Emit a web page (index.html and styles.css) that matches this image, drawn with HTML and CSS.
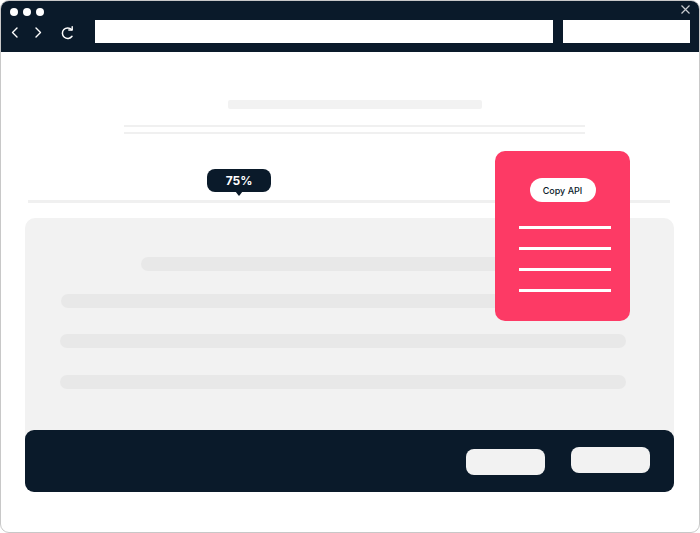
FILE: index.html
```html
<!DOCTYPE html>
<html>
<head>
<meta charset="utf-8">
<link rel="stylesheet" href="styles.css">
</head>
<body>
<div class="window">
  <header class="chrome">
    <div class="chrome-top">
      <div class="dots"><span></span><span></span><span></span></div>
      <svg class="close" width="9" height="9" viewBox="0 0 9 9"><path d="M0.5 0.5 L8.5 8.5 M8.5 0.5 L0.5 8.5" stroke="#c9ccd0" stroke-width="1.2" fill="none"/></svg>
    </div>
    <div class="chrome-bar">
      <svg class="nav" width="94" height="24" viewBox="0 0 94 24">
        <path d="M16 9 L11.5 13.5 L16 18" stroke="#fff" stroke-width="1.4" fill="none" stroke-linecap="round" stroke-linejoin="round"/>
        <path d="M35 9 L39.5 13.5 L35 18" stroke="#fff" stroke-width="1.4" fill="none" stroke-linecap="round" stroke-linejoin="round"/>
        <path d="M70.6 10.6 A5.3 5.3 0 1 0 71 17.3" stroke="#fff" stroke-width="1.5" fill="none" stroke-linecap="round"/>
        <path d="M71.2 7.6 L71.2 11 L67.8 11" stroke="#fff" stroke-width="1.4" fill="none" stroke-linecap="round" stroke-linejoin="round"/>
      </svg>
      <div class="url"></div>
      <div class="search"></div>
    </div>
  </header>
  <main class="page">
    <div class="title-bar"></div>
    <div class="sub-line"></div>
    <div class="sub-line second"></div>
    <div class="divider"></div>
    <section class="card">
      <div class="bar b1"></div>
      <div class="bar b2"></div>
      <div class="bar b3"></div>
      <div class="bar b4"></div>
      <div class="footer">
        <div class="btn"></div>
        <div class="btn up"></div>
      </div>
    </section>
  </main>
  <div class="tooltip">75%</div>
  <aside class="api-card">
    <div class="pill">Copy API</div>
    <div class="rule"></div>
    <div class="rule"></div>
    <div class="rule"></div>
    <div class="rule"></div>
  </aside>
</div>
</body>
</html>
```

FILE: styles.css
```css
* { box-sizing: border-box; }
html, body { margin: 0; padding: 0; background: #fff; }
body { font-family: Inter, "Open Sans", sans-serif; }

.window {
  position: relative;
  width: 700px;
  height: 533px;
  border: 1px solid #c8c8c8;
  border-radius: 9px;
  overflow: hidden;
  background: #fff;
}

.chrome {
  background: #0a1a2a;
  height: 51px;
  display: flex;
  flex-direction: column;
}
.chrome-top {
  height: 18px;
  display: flex;
  justify-content: space-between;
  align-items: flex-start;
  padding: 7px 9px 0 9px;
}
.dots { display: flex; gap: 5px; }
.dots span { width: 8px; height: 8px; border-radius: 50%; background: #fff; display: block; }
.close { margin-top: -3px; }

.chrome-bar {
  display: flex;
  align-items: center;
  height: 24px;
}
.nav { flex: none; }
.url { width: 458px; height: 23px; background: #fff; }
.search { width: 127px; height: 23px; background: #fff; margin-left: 10px; }

.page { padding-top: 48px; }
.title-bar {
  width: 254px; height: 9px; margin-left: 227px;
  background: #f2f2f2; border-radius: 2px;
}
.sub-line {
  width: 461px; height: 2px; margin-left: 123px; margin-top: 16px;
  background: #f0f0f0;
}
.sub-line.second { margin-top: 5px; }
.divider {
  width: 642px; height: 3px; margin-left: 27px; margin-top: 66px;
  background: #f0f0f0;
}

.card {
  margin: 15px 0 0 24px;
  width: 649px;
  height: 274px;
  background: #f2f2f2;
  border-radius: 10px 10px 9px 9px;
  display: flex;
  flex-direction: column;
  padding-top: 39px;
}
.bar { height: 14px; border-radius: 7px; background: #e8e8e8; }
.b1 { width: 418px; margin-left: 116px; }
.b2 { width: 565px; margin-left: 36px; margin-top: 23px; }
.b3 { width: 566px; margin-left: 35px; margin-top: 26px; }
.b4 { width: 566px; margin-left: 35px; margin-top: 27px; }

.footer {
  margin-top: auto;
  height: 62px;
  background: #0a1a2a;
  border-radius: 9px;
  display: flex;
  justify-content: flex-end;
  align-items: center;
  gap: 26px;
  padding-right: 24px;
}
.btn { width: 79px; height: 26px; border-radius: 8px; background: #f2f2f2; margin-top: 1px; }
.btn.up { margin-top: -2px; }

.tooltip {
  position: absolute;
  left: 206px;
  top: 168px;
  width: 64px;
  height: 23px;
  border-radius: 8px;
  background: #0a1a2a;
  color: #fff;
  font-size: 12px;
  font-weight: 700;
  display: flex;
  align-items: center;
  justify-content: center;
}
.tooltip::after {
  content: "";
  position: absolute;
  left: 28px;
  top: 22px;
  border-left: 4px solid transparent;
  border-right: 4px solid transparent;
  border-top: 5px solid #0a1a2a;
}

.api-card {
  position: absolute;
  left: 494px;
  top: 150px;
  width: 135px;
  height: 170px;
  border-radius: 10px;
  background: #fd3a65;
  display: flex;
  flex-direction: column;
  align-items: center;
  padding-top: 27px;
}
.pill {
  width: 66px; height: 24px; border-radius: 12px;
  background: #fff; color: #0a1a2a;
  font-size: 9px; font-weight: 500;
  display: flex; align-items: center; justify-content: center;
  margin-bottom: 24px;
}
.rule {
  width: 92px; height: 3px; background: #fff;
  margin-left: 4px; margin-bottom: 18px;
}
```
